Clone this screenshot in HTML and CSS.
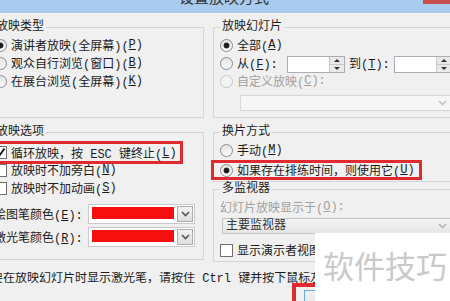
FILE: index.html
```html
<!DOCTYPE html>
<html lang="zh-CN">
<head>
    <meta charset="UTF-8">
    <meta name="viewport" content="width=device-width, initial-scale=1.0">
    <title>设置放映方式</title>
    <link rel="stylesheet" href="styles.css">
</head>
<body>
    <div class="titlebar">
        <div class="title">设置放映方式</div>
        <div class="close"></div>
    </div>

    <div class="dialog">
        <div class="panes">
            <!-- 放映类型 -->
            <fieldset class="group">
                <legend>放映类型</legend>
                <label class="row"><span class="radio on"></span>演讲者放映(全屏幕)(<u>P</u>)</label>
                <label class="row"><span class="radio"></span>观众自行浏览(窗口)(<u>B</u>)</label>
                <label class="row"><span class="radio"></span>在展台浏览(全屏幕)(<u>K</u>)</label>
            </fieldset>

            <!-- 放映幻灯片 -->
            <fieldset class="group">
                <legend>放映幻灯片</legend>
                <label class="row"><span class="radio on"></span>全部(<u>A</u>)</label>
                <div class="row">
                    <span class="radio"></span>
                    <span class="lbl-from">从(<u>F</u>):</span>
                    <span class="spin"><span class="field"></span><span class="arrows"><i class="up"></i><i class="down"></i></span></span>
                    <span class="lbl-to">到(<u>T</u>):</span>
                    <span class="spin"><span class="field"></span><span class="arrows"><i class="up"></i><i class="down"></i></span></span>
                </div>
                <label class="row off"><span class="radio"></span>自定义放映(<u>C</u>):</label>
                <div class="combo show-list off">
                    <span class="value"></span>
                    <span class="drop"><svg width="9" height="6" viewBox="0 0 9 6"><path d="M1 1l3.5 3.5L8 1" fill="none" stroke="#c4c4c4" stroke-width="1.6"/></svg></span>
                </div>
            </fieldset>

            <!-- 放映选项 -->
            <fieldset class="group options">
                <legend>放映选项</legend>
                <label class="row mark mark-left"><span class="check"><svg width="11" height="11" viewBox="0 0 11 11"><path d="M1.5 5.5l3 3 5-7" fill="none" stroke="#111" stroke-width="1.8"/></svg></span>循环放映，按 ESC 键终止(<u>L</u>)</label>
                <label class="row"><span class="check"></span>放映时不加旁白(<u>N</u>)</label>
                <label class="row"><span class="check"></span>放映时不加动画(<u>S</u>)</label>
                <div class="color-row first">
                    <span class="color-label">绘图笔颜色(<u>E</u>):</span>
                    <span class="color-pick"><span class="swatch"></span><span class="drop"><svg width="9" height="6" viewBox="0 0 9 6"><path d="M1 1l3.5 3.5L8 1" fill="none" stroke="#555" stroke-width="1.6"/></svg></span></span>
                </div>
                <div class="color-row">
                    <span class="color-label">激光笔颜色(<u>R</u>):</span>
                    <span class="color-pick"><span class="swatch"></span><span class="drop"><svg width="9" height="6" viewBox="0 0 9 6"><path d="M1 1l3.5 3.5L8 1" fill="none" stroke="#555" stroke-width="1.6"/></svg></span></span>
                </div>
            </fieldset>

            <div class="stack">
                <!-- 换片方式 -->
                <fieldset class="group">
                    <legend>换片方式</legend>
                    <label class="row"><span class="radio"></span>手动(<u>M</u>)</label>
                    <label class="row mark mark-right"><span class="radio on"></span>如果存在排练时间，则使用它(<u>U</u>)</label>
                </fieldset>

                <!-- 多监视器 -->
                <fieldset class="group monitors">
                    <legend>多监视器</legend>
                    <div class="row off">幻灯片放映显示于(<u>O</u>):</div>
                    <div class="combo monitor">
                        <span class="value">主要监视器</span>
                        <span class="drop"><svg width="9" height="6" viewBox="0 0 9 6"><path d="M1 1l3.5 3.5L8 1" fill="none" stroke="#b5b5b5" stroke-width="1.6"/></svg></span>
                    </div>
                    <label class="row presenter"><span class="check"></span>显示演示者视图(<u>W</u>)</label>
                </fieldset>
            </div>
        </div>

        <p class="hint">要在放映幻灯片时显示激光笔，请按住 Ctrl 键并按下鼠标左键。</p>

        <div class="buttons">
            <span class="marker"><button class="btn default"></button></span>
        </div>
    </div>

    <div class="watermark">软件技巧</div>
</body>
</html>
```

FILE: styles.css
```css
* {
    box-sizing: border-box;
}
body {
    margin: 0;
    width: 450px;
    height: 301px;
    overflow: hidden;
    position: relative;
    background-color: #f0f0f0;
    font-family: "Liberation Mono", "Noto Sans CJK SC", monospace;
    font-size: 12px;
    color: #1b1b1b;
}

/* barre de titre */
.titlebar {
    display: flex;
    height: 13px;
    overflow: hidden;
    background-color: #a9cbee;
}
.title {
    flex: 1;
    margin-top: -11px;
    padding-left: 25px;
    text-align: center;
    font-family: "Noto Sans CJK SC", sans-serif;
    font-size: 15px;
    line-height: 15px;
    color: #333;
}
.close {
    width: 27px;
    height: 4px;
    background-color: #c7504f;
}

.dialog {
    margin-left: -13px;
    padding-top: 7px;
}
.panes {
    display: grid;
    grid-template-columns: 217px 250px;
    column-gap: 9px;
    row-gap: 7px;
}
.group {
    margin: 0;
    min-width: 0;
    border: 1px solid #d5d5d5;
    padding: 2px 6px 6px;
}
legend {
    padding: 0 2px;
    line-height: 14px;
}
.options {
    align-self: start;
    padding-top: 4px;
    padding-bottom: 12px;
}
.stack {
    display: flex;
    flex-direction: column;
}
.stack .group {
    padding-bottom: 2px;
}

.row {
    display: flex;
    align-items: center;
    height: 18px;
    white-space: nowrap;
}
.off {
    color: #a0a0a0;
}

/* cases et boutons radio */
.radio {
    flex: none;
    width: 13px;
    height: 13px;
    margin-right: 4px;
    border: 1px solid #8a8a8a;
    border-radius: 50%;
    background: linear-gradient(#e4e4e4, #fbfbfb);
}
.radio.on {
    background: radial-gradient(circle, #1e1e1e 0 2.6px, transparent 3.3px), linear-gradient(#e4e4e4, #fbfbfb);
}
.off .radio {
    border-color: #c6c6c6;
    background: #f4f4f4;
}
.check {
    flex: none;
    display: flex;
    align-items: center;
    justify-content: center;
    width: 13px;
    height: 13px;
    margin-right: 4px;
    border: 1px solid #6f6f6f;
    background-color: #fff;
}

/* cadres rouges */
.mark {
    width: fit-content;
    outline: 3px solid #e02a2f;
}
.mark-left {
    height: 17px;
    margin-top: 1px;
    padding-right: 3px;
}
.mark-right {
    height: 14px;
    margin: 4px 0 2px -6px;
    padding: 0 4px 0 6px;
}

/* champs numériques */
.lbl-from {
    width: 50px;
}
.lbl-to {
    width: 45px;
    margin-left: 4px;
}
.spin {
    display: flex;
    width: 58px;
    height: 17px;
    margin-top: 3px;
    border: 1px solid #abadb3;
    background-color: #fff;
}
.field {
    flex: 1;
}
.arrows {
    display: flex;
    flex-direction: column;
    width: 15px;
    border-left: 1px solid #c9c9c9;
}
.arrows i {
    flex: 1;
    display: flex;
    align-items: center;
    justify-content: center;
    background-color: #e9e9e9;
}
.arrows i + i {
    border-top: 1px solid #c9c9c9;
}
.up::before {
    content: "";
    border: 3px solid transparent;
    border-top: 0;
    border-bottom: 3px solid #333;
}
.down::before {
    content: "";
    border: 3px solid transparent;
    border-bottom: 0;
    border-top: 3px solid #333;
}

/* listes déroulantes */
.combo {
    display: flex;
    align-items: center;
    height: 16px;
    border: 1px solid #d7d7d7;
    background-color: #f6f6f6;
}
.combo .value {
    flex: 1;
    padding-left: 3px;
    line-height: 14px;
}
.combo .drop {
    width: 17px;
    display: flex;
    justify-content: center;
}
.show-list {
    width: 212px;
    margin: 5px 0 0 20px;
}
.monitor {
    width: 230px;
    margin: 2px 0 0 2px;
    border-color: #c4c4c4;
    background: linear-gradient(#f3f3f3, #e6e6e6);
    color: #333;
}
.presenter {
    width: 95px;
    margin-top: 7px;
    overflow: hidden;
}

/* couleurs des stylos */
.color-row {
    display: flex;
    align-items: center;
    height: 20px;
    margin-top: 3px;
    white-space: nowrap;
}
.color-row.first {
    margin-top: 7px;
}
.color-label {
    width: 94px;
}
.color-pick {
    display: flex;
    width: 107px;
    height: 20px;
    border: 1px solid #c9c9c9;
    background-color: #fff;
}
.swatch {
    width: 82px;
    height: 12px;
    margin: 2px 0 0 3px;
    background-color: #f50f0f;
}
.color-pick .drop {
    display: flex;
    align-items: center;
    justify-content: center;
    width: 16px;
    height: 16px;
    margin: 1px 0 0 3px;
    border: 1px solid #acacac;
    background: linear-gradient(#f2f2f2, #dedede);
}

/* le reste de la ligne est caché par le filigrane */
.hint {
    width: 328px;
    margin: 10px 0 0;
    padding-left: 4px;
    line-height: 14px;
    white-space: nowrap;
    overflow: hidden;
}
.buttons {
    display: flex;
    margin-top: -3px;
    padding-left: 305px;
}
.marker {
    border: 4px solid #e02a2f;
    padding: 3px 8px 0;
}
.btn {
    display: block;
    width: 75px;
    height: 14px;
    border: 1px solid #6fa6d6;
    border-bottom: 0;
    background: linear-gradient(#f2f2f2, #e6e6e6);
}

/* filigrane */
.watermark {
    position: absolute;
    left: 315px;
    top: 233px;
    right: 0;
    bottom: 0;
    padding: 16px 0 0 8px;
    background-color: #fff;
    font-family: "Noto Sans CJK SC", sans-serif;
    font-size: 31px;
    line-height: 31px;
    color: #c9c9c9;
    white-space: nowrap;
}
```
